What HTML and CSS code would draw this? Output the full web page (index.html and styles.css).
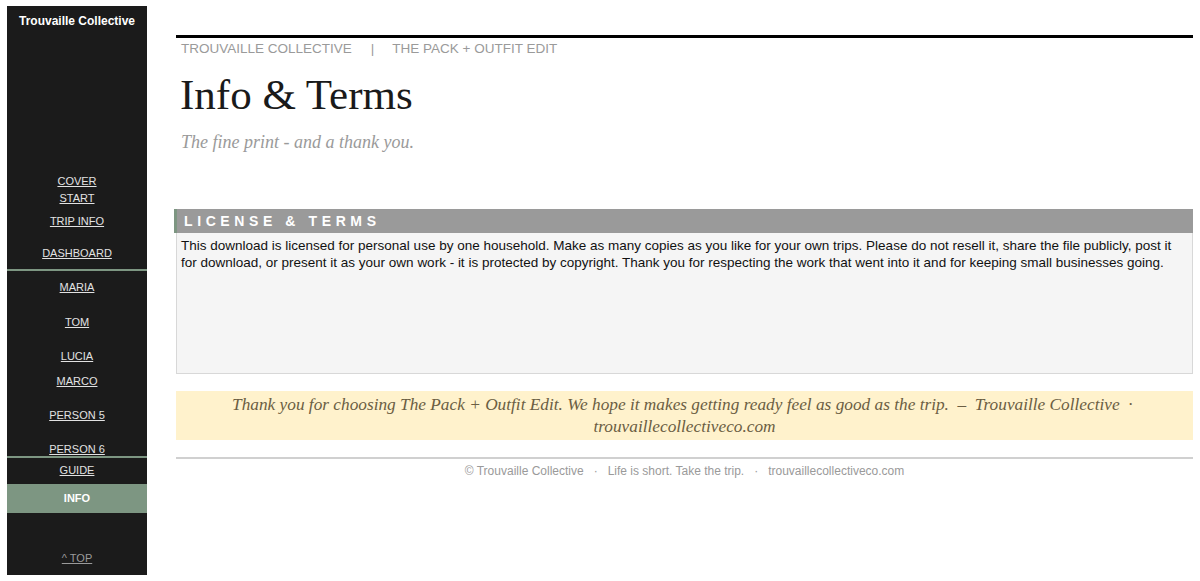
FILE: index.html
```html
<!DOCTYPE html>
<html lang="en">
<head>
<meta charset="utf-8">
<title>Info &amp; Terms</title>
<link rel="stylesheet" href="styles.css">
</head>
<body>
<div class="page">
  <nav class="sidebar">
    <div class="brand">Trouvaille Collective</div>
    <a class="nav-link m-cover" href="#">COVER</a>
    <a class="nav-link m-start" href="#">START</a>
    <a class="nav-link m-trip" href="#">TRIP INFO</a>
    <a class="nav-link m-dash" href="#">DASHBOARD</a>
    <div class="divider d-first"></div>
    <a class="nav-link m-maria" href="#">MARIA</a>
    <a class="nav-link m-tom" href="#">TOM</a>
    <a class="nav-link m-person" href="#">LUCIA</a>
    <a class="nav-link m-marco" href="#">MARCO</a>
    <a class="nav-link m-person" href="#">PERSON 5</a>
    <a class="nav-link m-person" href="#">PERSON 6</a>
    <div class="divider d-second"></div>
    <a class="nav-link m-guide" href="#">GUIDE</a>
    <div class="nav-active">INFO</div>
    <a class="nav-link nav-top" href="#">^ TOP</a>
  </nav>
  <main class="main">
    <div class="crumbs">
      <span>TROUVAILLE COLLECTIVE</span>
      <span class="sep">|</span>
      <span>THE PACK + OUTFIT EDIT</span>
    </div>
    <h1 class="title">Info &amp; Terms</h1>
    <p class="subtitle">The fine print - and a thank you.</p>
    <section class="section">
      <h2 class="section-head">LICENSE &amp; TERMS</h2>
      <div class="section-body">This download is licensed for personal use by one household. Make as many copies as you like for your own trips. Please do not resell it, share the file publicly, post it for download, or present it as your own work - it is protected by copyright. Thank you for respecting the work that went into it and for keeping small businesses going.</div>
    </section>
    <div class="thanks">Thank you for choosing The Pack + Outfit Edit. We hope it makes getting ready feel as good as the trip. &nbsp;&ndash;&nbsp; Trouvaille Collective &nbsp;&middot;&nbsp; trouvaillecollectiveco.com</div>
    <footer class="footer">
      <span>&copy; Trouvaille Collective</span>
      <span class="dot">&middot;</span>
      <span>Life is short. Take the trip.</span>
      <span class="dot">&middot;</span>
      <span>trouvaillecollectiveco.com</span>
    </footer>
  </main>
</div>
</body>
</html>
```

FILE: styles.css
```css
* { box-sizing: border-box; }
html, body { margin: 0; padding: 0; background: #ffffff; }
body { font-family: "Liberation Sans", Arial, sans-serif; color: #111; }

.page {
  display: flex;
  align-items: flex-start;
  padding: 6px 0 0 7px;
}

/* Sidebar */
.sidebar {
  width: 140px;
  height: 569px;
  flex: none;
  background: #1b1b1b;
  display: flex;
  flex-direction: column;
  align-items: stretch;
  text-align: center;
}
.brand {
  color: #ffffff;
  font-weight: bold;
  font-size: 12px;
  line-height: 15px;
  padding-top: 8px;
}
.nav-link {
  display: block;
  color: #e2e2e2;
  font-size: 11px;
  line-height: 14px;
  text-decoration: underline;
  text-underline-offset: 1px;
}
.m-cover { margin-top: 145px; }
.m-start { margin-top: 3px; }
.m-trip { margin-top: 9px; }
.m-dash { margin-top: 18px; }
.m-maria { margin-top: 9px; }
.m-tom { margin-top: 21px; }
.m-person { margin-top: 20px; }
.m-marco { margin-top: 11px; }
.m-guide { margin-top: 5px; }
.divider {
  height: 2px;
  background: #7d9682;
}
.d-first { margin-top: 9px; }
.d-second { margin-top: 0; }
.nav-active {
  margin-top: 7px;
  height: 29px;
  line-height: 29px;
  background: #7d9682;
  color: #ffffff;
  font-weight: bold;
  font-size: 11px;
}
.nav-top {
  margin-top: 38px;
  color: #9a9a9a;
}

/* Main */
.main {
  width: 1017px;
  margin-left: 29px;
  padding-top: 29px;
}
.crumbs {
  border-top: 3px solid #000;
  padding: 3px 0 0 5px;
  font-size: 13.5px;
  line-height: 16px;
  color: #9a9a9a;
  display: flex;
}
.crumbs .sep { margin: 0 18px 0 19px; }
.title {
  margin: 14px 0 0 4px;
  font-family: "Liberation Serif", "Times New Roman", serif;
  font-weight: normal;
  font-size: 43px;
  line-height: 48px;
  color: #1a1a1a;
}
.subtitle {
  margin: 13px 0 0 5px;
  font-family: "Liberation Serif", "Times New Roman", serif;
  font-style: italic;
  font-size: 18px;
  line-height: 20px;
  color: #9a9a9a;
}

.section { margin-top: 57px; }
.section-head {
  margin: 0 0 0 -2px;
  height: 24px;
  line-height: 24px;
  background: #9a9a9a;
  border-left: 3px solid #7d9682;
  color: #ffffff;
  font-size: 14px;
  font-weight: bold;
  letter-spacing: 4.6px;
  padding-left: 7px;
}
.section-body {
  height: 141px;
  background: #f5f5f5;
  border: 1px solid #d8d8d8;
  border-top: none;
  padding: 4px 10px 0 4px;
  font-size: 13.5px;
  line-height: 17px;
  color: #111;
}

.thanks {
  margin-top: 17px;
  background: #fff2cc;
  padding: 3px 20px 2px;
  text-align: center;
  font-family: "Liberation Serif", "Times New Roman", serif;
  font-style: italic;
  font-size: 17.3px;
  line-height: 22px;
  color: #6b5e43;
}

.footer {
  margin-top: 17px;
  border-top: 2px solid #d0d0d0;
  padding-top: 5px;
  display: flex;
  justify-content: center;
  font-size: 12px;
  line-height: 14px;
  color: #9a9a9a;
}
.footer .dot { margin: 0 10px; }
```
